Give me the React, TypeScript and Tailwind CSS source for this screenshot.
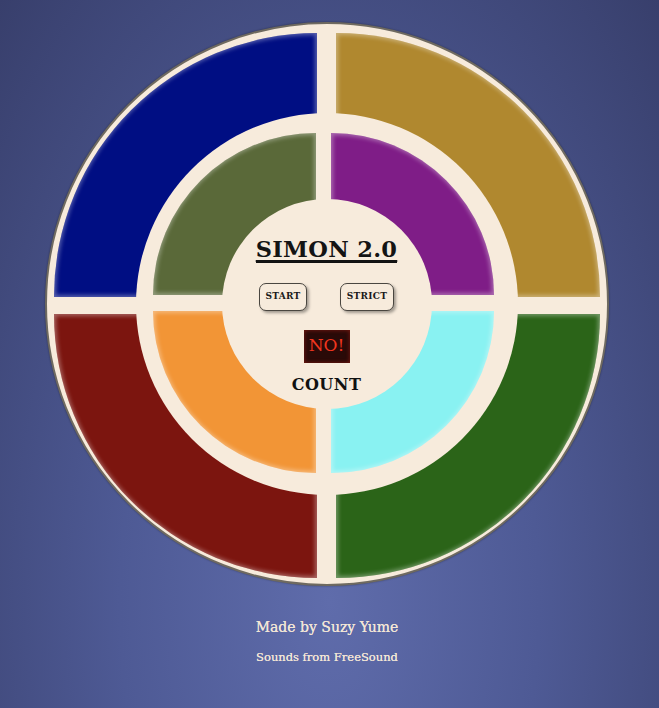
import React from "react";

const serif = "font-['DejaVu_Serif','Liberation_Serif',serif]";

function Quad({ color, corner, size }: { color: string; corner: string; size: string }) {
  return (
    <div
      className={`${size} ${corner} ${color} shadow-[inset_0_0_4px_2px_rgba(255,255,255,0.35)]`}
    />
  );
}

export default function App() {
  return (
    <div className={`min-h-[708px] w-full ${serif} bg-[radial-gradient(ellipse_at_50%_85%,#5f6cab_0%,#4e5a95_45%,#383f6c_100%)] pt-[22px] flex flex-col items-center`}>
      <div className="relative ml-[-6px] w-[564px] h-[564px] rounded-full bg-[#f7ebdc] border-2 border-[#6f6a60] shadow-[0_0_2px_rgba(0,0,0,0.4)] px-[7px] py-[9px]">
        <div className="grid grid-cols-2 gap-x-[19px] gap-y-[17px]">
          <Quad size="h-[264px]" color="bg-[#000e83]" corner="rounded-tl-[100%]" />
          <Quad size="h-[264px]" color="bg-[#b0882f]" corner="rounded-tr-[100%]" />
          <Quad size="h-[264px]" color="bg-[#7c150f]" corner="rounded-bl-[100%]" />
          <Quad size="h-[264px]" color="bg-[#2b6418]" corner="rounded-br-[100%]" />
        </div>
        <div className="absolute inset-0 flex items-center justify-center">
          <div className="relative w-[382px] h-[382px] rounded-full bg-[#f7ebdc] flex items-center justify-center">
            <div className="grid grid-cols-[163px_163px] grid-rows-[162px_162px] gap-x-[15px] gap-y-[16px] -ml-[7px] -mt-[2px]">
              <Quad size="" color="bg-[#5a6939]" corner="rounded-tl-[100%]" />
              <Quad size="" color="bg-[#7f1d87]" corner="rounded-tr-[100%]" />
              <Quad size="" color="bg-[#f29536]" corner="rounded-bl-[100%]" />
              <Quad size="" color="bg-[#89f2f2]" corner="rounded-br-[100%]" />
            </div>
            <div className="absolute left-1/2 top-1/2 -translate-x-1/2 -translate-y-1/2 w-[210px] h-[210px] rounded-full bg-[#f7ebdc] flex flex-col items-center pt-[39px]">
              <div className="border-b-[1.5px] border-[#111] pb-[1px]">
                <div className="text-[22.5px] leading-none font-bold text-[#141414] underline decoration-2 underline-offset-[3px] tracking-[0.3px]">
                  SIMON 2.0
                </div>
              </div>
              <div className="flex gap-[33px] mt-[20px]">
                <button className="w-[48px] h-[28px] rounded-[7px] border-[1.5px] border-[#4a4640] bg-[#f7ebdc] text-[9px] font-bold text-[#1a1a1a] shadow-[2px_2px_3px_rgba(0,0,0,0.35)] tracking-[0.3px]">
                  START
                </button>
                <button className="w-[54px] h-[28px] rounded-[7px] border-[1.5px] border-[#4a4640] bg-[#f7ebdc] text-[9px] font-bold text-[#1a1a1a] shadow-[2px_2px_3px_rgba(0,0,0,0.35)] tracking-[0.3px]">
                  STRICT
                </button>
              </div>
              <div className="mt-[19px] w-[46px] h-[33px] bg-[#2a0a08] shadow-[inset_0_0_4px_rgba(140,30,20,0.9)] flex items-center justify-center text-[17px] text-[#f0361f] font-['DejaVu_Serif',serif]">
                NO!
              </div>
              <div className="mt-[14px] text-[16px] leading-none font-bold text-[#111] tracking-[0.5px]">
                COUNT
              </div>
            </div>
          </div>
        </div>
      </div>
      <div className="mt-[34px] -ml-[5px] text-[14px] text-[#f3e6d6] leading-none [text-shadow:0_0_0.5px_#f3e6d6]">Made by Suzy Yume</div>
      <div className="mt-[18px] -ml-[5px] text-[11.5px] text-[#f3e6d6] leading-none [text-shadow:0_0_0.5px_#f3e6d6]">Sounds from FreeSound</div>
    </div>
  );
}
